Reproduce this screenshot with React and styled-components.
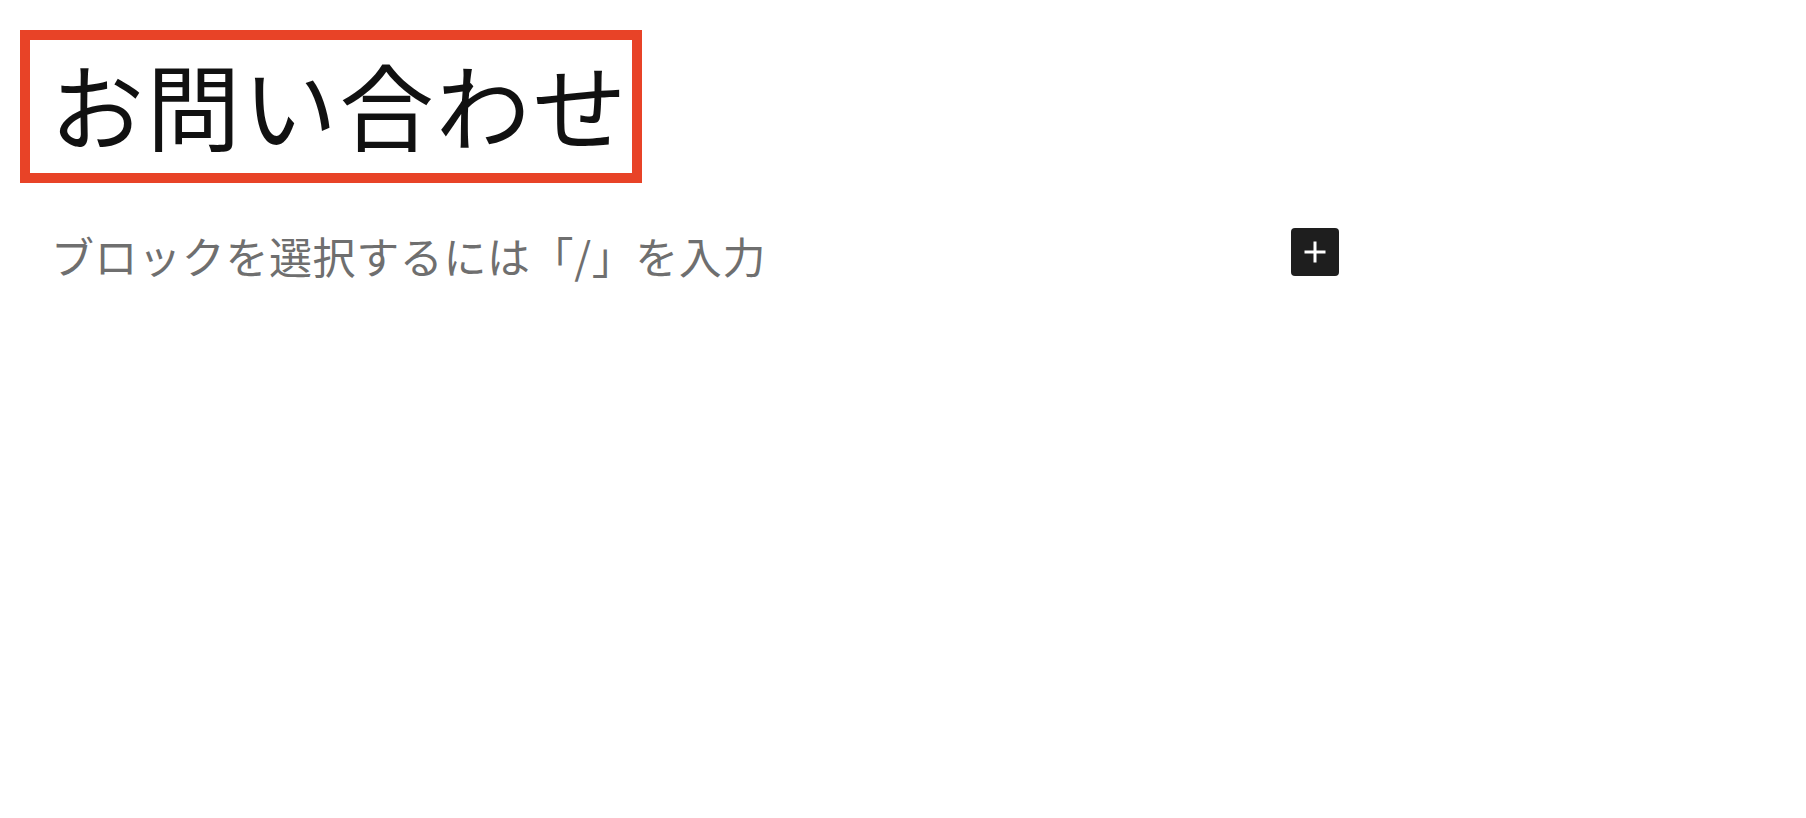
import React from 'react'
import styled, { createGlobalStyle } from 'styled-components'

const GlobalStyle = createGlobalStyle`
  html, body {
    margin: 0;
    padding: 0;
    background: #fff;
  }
  body {
    font-family: "Noto Sans CJK JP", "Noto Sans", sans-serif;
    color: #1e1e1e;
  }
`

const Canvas = styled.div`
  padding: 30px 0 0 20px;
  display: flex;
  flex-direction: column;
  align-items: flex-start;
`

const Title = styled.h1`
  margin: 0;
  border: 10px solid #e84327;
  padding: 0 3px 6px 20px;
  font-size: 94px;
  font-weight: 400;
  line-height: 127px;
  letter-spacing: 2.5px;
  color: #111;
  white-space: nowrap;
`

const BlockRow = styled.div`
  margin-top: 45px;
  margin-left: 31px;
  width: 1288px;
  display: flex;
  justify-content: space-between;
  align-items: flex-start;
`

const Placeholder = styled.p`
  margin: -4px 0 0;
  font-size: 43px;
  line-height: 63px;
  letter-spacing: 0.6px;
  color: #6f6f6f;
`

const InserterButton = styled.button`
  width: 48px;
  height: 48px;
  padding: 0;
  border: none;
  border-radius: 4px;
  background: #1e1e1e;
  color: #fff;
  display: flex;
  align-items: center;
  justify-content: center;
  cursor: pointer;
`

const PlusIcon = () => (
  <svg width="48" height="48" viewBox="0 0 24 24" fill="currentColor" aria-hidden="true">
    <path d="M11.25 12.75V17.25H12.75V12.75H17.25V11.25H12.75V6.75H11.25V11.25H6.75V12.75H11.25Z" />
  </svg>
)

const App = () => {
  return (
    <>
      <GlobalStyle />
      <Canvas>
        <Title>お問い合わせ</Title>
        <BlockRow>
          <Placeholder>ブロックを選択するには「/」を入力</Placeholder>
          <InserterButton aria-label="ブロックを追加">
            <PlusIcon />
          </InserterButton>
        </BlockRow>
      </Canvas>
    </>
  )
}

export default App
